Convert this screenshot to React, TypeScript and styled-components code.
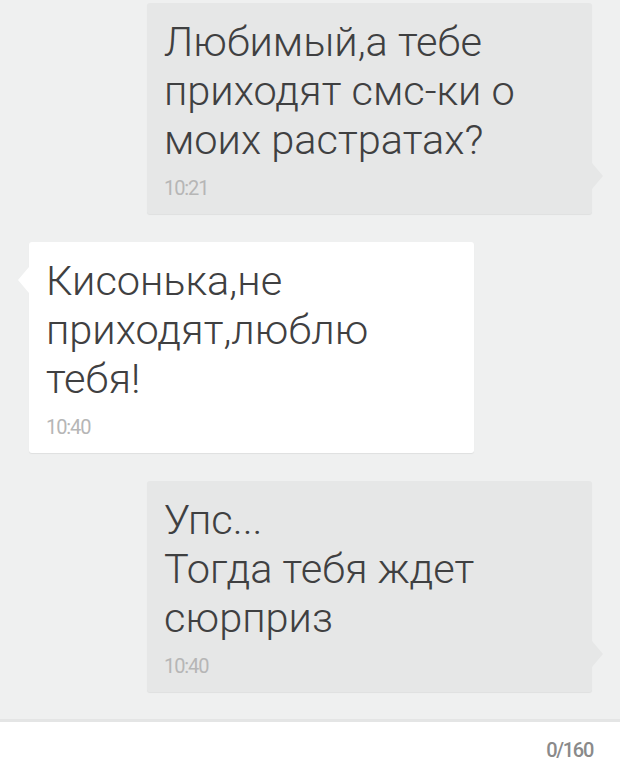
import styled, { createGlobalStyle, css } from "styled-components";

const GlobalStyle = createGlobalStyle`
  html, body {
    margin: 0;
    padding: 0;
    background: #eff0f0;
    font-family: Roboto, "Noto Sans", "Liberation Sans", sans-serif;
  }
`;

type Side = "out" | "in";

interface Message {
  id: number;
  side: Side;
  lines: string[];
  time: string;
}

const messages: Message[] = [
  {
    id: 1,
    side: "out",
    lines: ["Любимый,а тебе", "приходят смс-ки о", "моих растратах?"],
    time: "10:21",
  },
  {
    id: 2,
    side: "in",
    lines: ["Кисонька,не", "приходят,люблю", "тебя!"],
    time: "10:40",
  },
  {
    id: 3,
    side: "out",
    lines: ["Упс...", "Тогда тебя ждет", "сюрприз"],
    time: "10:40",
  },
];

const App = () => {
  return (
    <Page>
      <GlobalStyle />
      <Thread>
        {messages.map((m) => (
          <Bubble key={m.id} $side={m.side}>
            <Text>
              {m.lines.map((line, i) => (
                <Line key={i}>{line}</Line>
              ))}
            </Text>
            <Time>{m.time}</Time>
          </Bubble>
        ))}
      </Thread>
      <Composer>
        <Counter>0/160</Counter>
      </Composer>
    </Page>
  );
};

export default App;

const Page = styled.div`
  height: 773px;
  display: flex;
  flex-direction: column;
  overflow: hidden;
`;

const Thread = styled.div`
  flex: 1;
  display: flex;
  flex-direction: column;
  gap: 28px;
  padding: 3px 28px 0 29px;
`;

const Bubble = styled.div<{ $side: Side }>`
  position: relative;
  width: 445px;
  box-sizing: border-box;
  padding: 14px 17px 15px;
  border-radius: 3px;
  box-shadow: 0 1px 1px rgba(0, 0, 0, 0.07);

  &::after {
    content: "";
    position: absolute;
    width: 0;
    height: 0;
    border-top: 13px solid transparent;
    border-bottom: 13px solid transparent;
  }

  ${({ $side }) =>
    $side === "out"
      ? css`
          align-self: flex-end;
          background: #e6e7e7;

          &::after {
            right: -11px;
            bottom: 25px;
            border-left: 11px solid #e6e7e7;
          }
        `
      : css`
          align-self: flex-start;
          background: #ffffff;

          &::after {
            left: -11px;
            top: 25px;
            border-right: 11px solid #ffffff;
          }
        `}
`;

const Text = styled.div`
  font-size: 41.5px;
  font-weight: 300;
  line-height: 49px;
  color: #3f4041;
`;

const Line = styled.div`
  white-space: nowrap;
`;

const Time = styled.div`
  margin-top: 13px;
  font-size: 20px;
  line-height: 22px;
  letter-spacing: -1.1px;
  color: #b6b6b6;
`;

const Composer = styled.div`
  height: 54px;
  border-top: 3px solid #e4e5e5;
  background: #ffffff;
  display: flex;
  align-items: center;
  justify-content: flex-end;
  padding: 4px 27px 0 0;
  box-sizing: border-box;
`;

const Counter = styled.span`
  font-size: 20px;
  font-weight: 500;
  letter-spacing: -1.3px;
  color: #8a8a8a;
`;
